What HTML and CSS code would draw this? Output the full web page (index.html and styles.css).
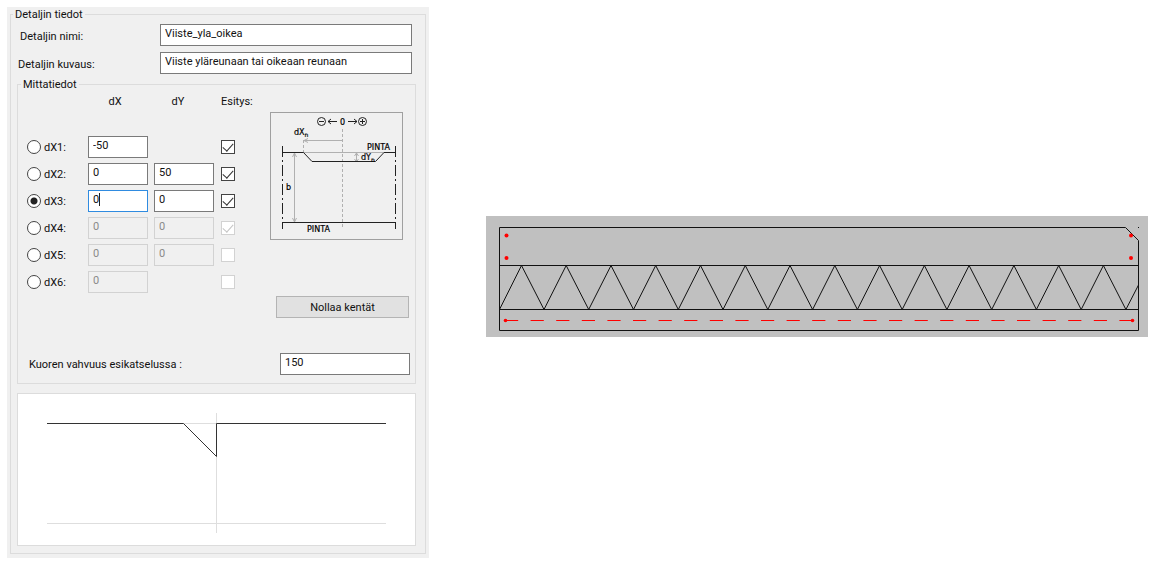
FILE: index.html
```html
<!DOCTYPE html>
<html lang="fi">
<head>
<meta charset="utf-8">
<title>Detaljin tiedot</title>
<link rel="stylesheet" href="styles.css">
</head>
<body>
<main class="page">
  <form class="panel">
    <fieldset class="group details">
      <legend>Detaljin tiedot</legend>
      <div class="field">
        <label class="name-label" for="nimi">Detaljin nimi:</label>
        <input class="text" id="nimi" type="text" value="Viiste_yla_oikea">
      </div>
      <div class="field">
        <label for="kuvaus">Detaljin kuvaus:</label>
        <input class="text" id="kuvaus" type="text" value="Viiste yläreunaan tai oikeaan reunaan">
      </div>

      <fieldset class="group measures">
        <legend>Mittatiedot</legend>
        <div class="columns">
          <div class="points">
            <div class="point head">
              <span></span><span class="axis">dX</span><span class="axis axis-y">dY</span><span class="show">Esitys:</span>
            </div>
            <div class="point">
              <label class="pick"><input class="radio" type="radio" name="dx">dX1:</label>
              <input class="text" type="text" aria-label="dX1 X" value="-50">
              <span></span>
              <input class="check" type="checkbox" aria-label="Esitys 1" checked>
            </div>
            <div class="point">
              <label class="pick"><input class="radio" type="radio" name="dx">dX2:</label>
              <input class="text" type="text" aria-label="dX2 X" value="0">
              <input class="text" type="text" aria-label="dX2 Y" value="50">
              <input class="check" type="checkbox" aria-label="Esitys 2" checked>
            </div>
            <div class="point">
              <label class="pick"><input class="radio" type="radio" name="dx" checked>dX3:</label>
              <span class="editing"><input class="text active" type="text" aria-label="dX3 X" value="0"></span>
              <input class="text" type="text" aria-label="dX3 Y" value="0">
              <input class="check" type="checkbox" aria-label="Esitys 3" checked>
            </div>
            <div class="point">
              <label class="pick"><input class="radio" type="radio" name="dx">dX4:</label>
              <input class="text" type="text" aria-label="dX4 X" value="0" disabled>
              <input class="text" type="text" aria-label="dX4 Y" value="0" disabled>
              <input class="check" type="checkbox" aria-label="Esitys 4" checked disabled>
            </div>
            <div class="point">
              <label class="pick"><input class="radio" type="radio" name="dx">dX5:</label>
              <input class="text" type="text" aria-label="dX5 X" value="0" disabled>
              <input class="text" type="text" aria-label="dX5 Y" value="0" disabled>
              <input class="check" type="checkbox" aria-label="Esitys 5" disabled>
            </div>
            <div class="point">
              <label class="pick"><input class="radio" type="radio" name="dx">dX6:</label>
              <input class="text" type="text" aria-label="dX6 X" value="0" disabled>
              <span></span>
              <input class="check" type="checkbox" aria-label="Esitys 6" disabled>
            </div>
          </div>

          <div class="side">
            <svg class="guide" viewBox="0 0 131 126" role="img" aria-label="Mittojen selite">
              <g class="guide-grey">
                <path stroke-dasharray="3 2" d="M71.5 16V116M32.5 27V40"/>
                <path d="M33 27.5H71M37 25.5l-4 2 4 2M33 39.5H113M85.500 40V49M83.500 43l2-3 2 3M83.500 46l2 3 2-3M23.500 40V109M21.500 44l2-4 2 4M21.500 105l2 4 2-4"/>
              </g>
              <g class="guide-ink">
                <circle cx="50.500" cy="8.500" r="4"/><path d="M48 8.500h5"/>
                <circle cx="91.500" cy="8.500" r="4"/><path d="M89 8.500h5M91.500 6v5"/>
                <path d="M57 8.500h9M60 6l-3 2.500 3 2.500M77 8.500h9M83 6l3 2.500-3 2.500"/>
                <path d="M11.500 39.500H32.500L41 48.500H104.500L113 39.500H124.500M11.500 109.500H124.500"/>
                <path stroke-dasharray="11 3 2 3" d="M11.500 33V116M124.500 33V116"/>
              </g>
              <g class="guide-text">
                <text x="69" y="12">0</text>
                <text x="23" y="22">dX<tspan class="sub" dy="2">n</tspan></text>
                <text x="96" y="37">PINTA</text>
                <text x="90" y="47">dY<tspan class="sub" dy="2">n</tspan></text>
                <text x="15" y="77">b</text>
                <text x="36" y="119">PINTA</text>
              </g>
            </svg>
            <button class="reset" type="button">Nollaa kentät</button>
          </div>
        </div>

        <div class="thickness">
          <label for="vahvuus">Kuoren vahvuus esikatselussa :</label>
          <input class="text" id="vahvuus" type="text" value="150">
        </div>
      </fieldset>

      <svg class="profile" viewBox="0 0 397 151" role="img" aria-label="Esikatselu">
        <path class="profile-guide" d="M29 29.500H368M29 129.500H368M198.500 19V139"/>
        <path class="profile-line" d="M29 29.500H165.500L198.500 62.500V29.500H368"/>
      </svg>
    </fieldset>
  </form>

  <svg class="section" viewBox="0 0 662 121" role="img" aria-label="Elementin leikkaus">
    <path class="section-line" d="M13.500 11.500H639.500L652.500 24.500V114.500H13.500ZM13.500 49.500H652.500M13.500 93.500H652.500M652 11.500h1"/>
    <path class="section-line" d="M13.500 93.500L35.500 49.500L58 93.500L80.200 49.500L102.700 93.500L125 49.500L147.500 93.500L169.700 49.500L192.300 93.500L214.500 49.500L237 93.500L259.300 49.500L281.800 93.500L304 49.500L326.600 93.500L348.800 49.500L371.400 93.500L393.600 49.500L416.200 93.500L438.400 49.500L460.900 93.500L483.100 49.500L505.700 93.500L527.900 49.500L550.400 93.500L572.700 49.500L595.200 93.500L617.400 49.500L639.900 93.500L652.500 69"/>
    <path class="rebar" stroke-dasharray="13.200 12.400" d="M19 104.500H647"/>
    <g class="rebar-end">
      <circle cx="20.500" cy="19.500" r="2"/><circle cx="20.500" cy="42" r="2"/>
      <circle cx="645" cy="19.500" r="2"/><circle cx="645" cy="42" r="2"/>
      <circle cx="19.500" cy="104.500" r="1.800"/><circle cx="646.500" cy="104.500" r="1.800"/>
    </g>
  </svg>
</main>
</body>
</html>
```
FILE: styles.css
```css
* { box-sizing: border-box; }

body {
  margin: 0;
  background: #fff;
  color: #111;
  font: 11px/15px Roboto, "Noto Sans", sans-serif;
}

input, button { font: inherit; color: inherit; margin: 0; }

.page {
  display: grid;
  grid-template-columns: minmax(400px, 422fr) minmax(0, 662fr);
  column-gap: 57px;
  align-items: start;
  padding: 7px 3px 7px 7px;
}

.panel { background: #f0f0f0; padding: 0 3px 4px; }

.group { margin: 0; border: 1px solid #dcdcdc; min-width: 0; }
.group > legend { padding: 0 2px; }

.details { padding: 2px 9px 7px 6px; }
.details > legend { margin-left: -4px; }

.field {
  display: grid;
  grid-template-columns: 142px 1fr;
  align-items: center;
  padding: 0 4px 0 1px;
  margin-bottom: 6px;
}
.field label { padding-top: 2px; }
.field .name-label { padding-left: 2px; }

.text {
  width: 100%;
  min-width: 0;
  height: 22px;
  padding: 0 4px 4px;
  border: 1px solid #7a7a7a;
  border-radius: 0;
  background: #fff;
}
.text:disabled { background: #f0f0f0; border-color: #d2d2d2; color: #8a8a8a; }
.text.active { border-color: #2f8be0; outline: none; }

.measures { margin-top: -3px; padding: 0 5px 8px 10px; }
.measures > legend { margin-left: -7px; }

.columns { display: flex; justify-content: space-between; }

.points { display: grid; row-gap: 5px; align-content: start; }
.point {
  display: grid;
  grid-template-columns: 54px 60px 60px 32px;
  column-gap: 6px;
  align-items: center;
}
.point.head { margin: 2px 0 22px; }
.axis { padding-right: 6px; text-align: center; }
.axis-y { padding-right: 12px; }
.show { padding-left: 1px; }

.pick { display: flex; align-items: center; gap: 3px; margin-left: -1px; white-space: nowrap; }

.radio, .check { appearance: none; flex: none; background: #fff; }
.radio { width: 14px; height: 14px; border: 1px solid #444; border-radius: 50%; }
.radio:checked { background: radial-gradient(circle, #222 3px, #fff 4px); }

.check { display: grid; place-items: center; width: 14px; height: 14px; margin-left: 1px; border: 1px solid #444; }
.check:checked::before {
  content: "";
  width: 5px;
  height: 9px;
  margin-bottom: 3px;
  border: solid #333;
  border-width: 0 1px 1px 0;
  transform: rotate(42deg);
}
.check:disabled { border-color: #d2d2d2; }
.check:disabled::before { border-color: #c4c4c4; }

.editing { position: relative; }
.editing .text { display: block; }
.editing::after {
  content: "";
  position: absolute;
  left: 11px;
  top: 3px;
  width: 1px;
  height: 13px;
  background: #222;
}

.side { display: flex; flex-direction: column; align-items: flex-end; padding: 20px 1px 0 0; }
.guide {
  width: 133px;
  margin-right: 6px;
  border: 1px solid #a0a0a0;
}
.guide-grey { fill: none; stroke: #b0b0b0; }
.guide-ink { fill: none; stroke: #222; }
.guide-text { font: 8px "DejaVu Sans", sans-serif; fill: #000; stroke: #000; stroke-width: 0.2; }
.guide-text .sub { font-size: 6px; }

.reset {
  width: 133px;
  height: 22px;
  margin-top: 56px;
  padding: 0;
  border: 1px solid #b4b4b4;
  border-radius: 0;
  background: #e1e1e1;
}

.thickness { display: flex; align-items: center; justify-content: space-between; margin-top: 35px; padding-left: 1px; }
.thickness .text { width: 130px; }

.profile {
  display: block;
  width: 100%;
  margin-top: 9px;
  border: 1px solid #dcdcdc;
  background: #fff;
}
.profile-guide { fill: none; stroke: #dedede; }
.profile-line { fill: none; stroke: #333; }

.section { display: block; width: 100%; margin-top: 209px; background: #c0c0c0; }
.section-line { fill: none; stroke: #111; }
.rebar { fill: none; stroke: #f00; }
.rebar-end { fill: #f00; }
```
